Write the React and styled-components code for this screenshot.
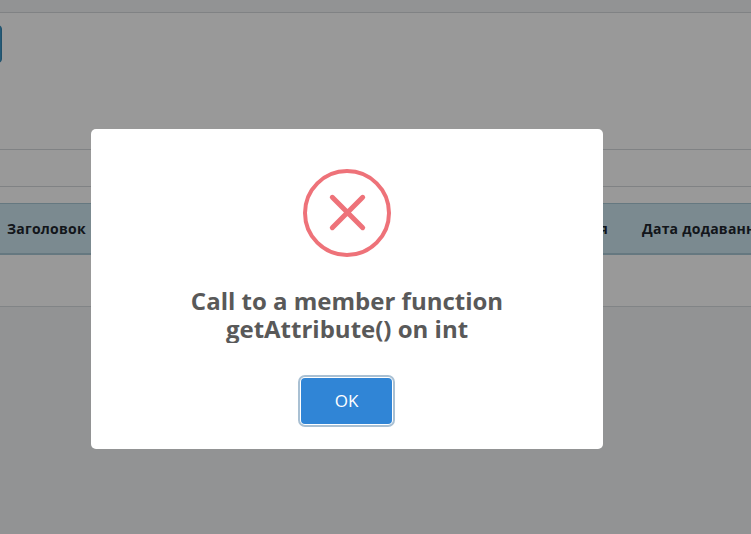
import React from 'react';
import styled, { createGlobalStyle } from 'styled-components';

const GlobalStyle = createGlobalStyle`
  * { box-sizing: border-box; }
  body {
    margin: 0;
    overflow: hidden;
    font-family: 'Open Sans', 'Noto Sans', sans-serif;
  }
`;

const Page = styled.main`
  display: flex;
  flex-direction: column;
  width: 751px;
  height: 534px;
  overflow: hidden;
  background: #f3f5f7;
`;

const TopBar = styled.header`
  height: 13px;
  flex: none;
  border-bottom: 1px solid #d6d9dc;
`;

const Panel = styled.section`
  flex: none;
  height: 294px;
  background: #fff;
  border-bottom: 1px solid #d8dcdf;
`;

const Toolbar = styled.div`
  height: 136px;
  padding-top: 12px;
`;

const AddButton = styled.button`
  display: block;
  width: 42px;
  height: 38px;
  margin-left: -40px;
  border: 1px solid #3787b3;
  border-radius: 4px;
  background: #3f98c8;
`;

const FilterField = styled.div`
  height: 38px;
  margin-bottom: 16px;
  border: solid #d6d9dc;
  border-width: 1px 0;
`;

const TableHead = styled.div`
  display: grid;
  grid-template-columns: 635px 1fr;
  align-items: center;
  height: 52px;
  background: #cde6f1;
  border-top: 1px solid #a9c8d5;
  border-bottom: 2px solid #a9c8d5;
  color: #20262e;
  font-size: 14px;
  font-weight: 700;
  line-height: 20px;
  letter-spacing: 0.24px;
  white-space: nowrap;
`;

const HeadGroup = styled.div`
  display: flex;
  justify-content: space-between;
  padding: 0 27px 0 7px;
`;

const HeadCell = styled.span`
  padding-left: ${({ $inset }) => $inset || 0}px;
`;

const Overlay = styled.div`
  position: fixed;
  inset: 0;
  background: rgba(0, 0, 0, 0.4);
`;

const Modal = styled.div`
  display: flex;
  flex-direction: column;
  align-items: center;
  width: 512px;
  height: 320px;
  margin: 129px 0 0 91px;
  padding-top: 40px;
  border-radius: 5px;
  background: #fff;
`;

const ErrorIcon = styled.svg`
  display: block;
  width: 88px;
  height: 88px;
  fill: none;
  stroke: #ee7279;
  stroke-width: 4;
`;

const Title = styled.h2`
  width: 400px;
  height: 56px;
  margin: 30px 0 0;
  overflow: hidden;
  color: #595959;
  font-size: 24px;
  font-weight: 700;
  line-height: 28px;
  text-align: center;
`;

const ConfirmButton = styled.button`
  width: 91px;
  height: 46px;
  margin: 35px 1px 0 0;
  padding: 0;
  border: 0;
  border-radius: 4px;
  background: #3085d6;
  box-shadow: 0 0 0 1px #fff, 0 0 0 3px #a9c0d3;
  color: #fff;
  font: 400 17px/24px 'Open Sans', sans-serif;
`;

export default function App() {
  return (
    <>
      <GlobalStyle />
      <Page>
        <TopBar />
        <Panel>
          <Toolbar>
            <AddButton aria-label="Додати" />
          </Toolbar>
          <FilterField />
          <TableHead>
            <HeadGroup>
              <HeadCell>Заголовок</HeadCell>
              <HeadCell>я</HeadCell>
            </HeadGroup>
            <HeadCell $inset={7}>Дата додавання</HeadCell>
          </TableHead>
        </Panel>
      </Page>
      <Overlay>
        <Modal role="alertdialog">
          <ErrorIcon viewBox="0 0 88 88">
            <circle cx="44" cy="44" r="42" />
            <path d="M29.3 28.3L59.7 58.7M59.7 28.3L29.3 58.7" strokeWidth="5" strokeLinecap="round" />
          </ErrorIcon>
          <Title>Call to a member function getAttribute() on int</Title>
          <ConfirmButton>OK</ConfirmButton>
        </Modal>
      </Overlay>
    </>
  );
}
